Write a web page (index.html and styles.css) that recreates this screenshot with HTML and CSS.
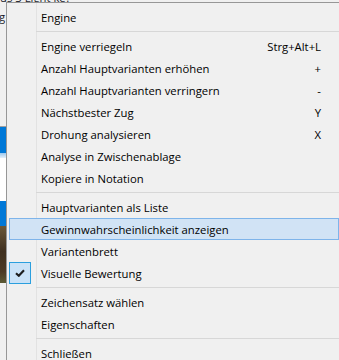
FILE: index.html
```html
<!DOCTYPE html>
<html lang="de">

<head>
    <meta charset="UTF-8">
    <meta name="viewport" content="width=device-width, initial-scale=1.0">
    <title>Engine Kontextmenü</title>
    <link rel="stylesheet" href="styles.css">
</head>

<body>
    <!-- window behind the popup, only its left edge shows -->
    <div class="backdrop">
        <div class="panel">
            <div class="caption">us 3 Lignt ke?</div>
            <div class="cut">g</div>
        </div>
        <div class="rule"></div>
        <div class="band blue"></div>
        <div class="band fade"></div>
        <div class="band white"></div>
        <div class="band blue-low"></div>
        <div class="band photo"></div>
        <div class="band grass"></div>
    </div>

    <ul class="menu">
        <li class="item"><span class="icon"></span><span class="label">Engine</span></li>
        <li class="sep"></li>
        <li class="item"><span class="icon"></span><span class="label">Engine verriegeln</span><span class="key">Strg+Alt+L</span></li>
        <li class="item"><span class="icon"></span><span class="label">Anzahl Hauptvarianten erhöhen</span><span class="key">+</span></li>
        <li class="item"><span class="icon"></span><span class="label">Anzahl Hauptvarianten verringern</span><span class="key">-</span></li>
        <li class="item"><span class="icon"></span><span class="label">Nächstbester Zug</span><span class="key">Y</span></li>
        <li class="item"><span class="icon"></span><span class="label">Drohung analysieren</span><span class="key">X</span></li>
        <li class="item"><span class="icon"></span><span class="label">Analyse in Zwischenablage</span></li>
        <li class="item"><span class="icon"></span><span class="label">Kopiere in Notation</span></li>
        <li class="sep"></li>
        <li class="item"><span class="icon"></span><span class="label">Hauptvarianten als Liste</span></li>
        <li class="item hot"><span class="icon"></span><span class="label">Gewinnwahrscheinlichkeit anzeigen</span></li>
        <li class="item"><span class="icon"></span><span class="label">Variantenbrett</span></li>
        <li class="item checked">
            <span class="icon">
                <svg width="10" height="8" viewBox="0 0 10 8">
                    <path d="M1 4.2 L3.8 6.8 L9 1.2" fill="none" stroke="#1e1e1e" stroke-width="2.1" />
                </svg>
            </span>
            <span class="label">Visuelle Bewertung</span>
        </li>
        <li class="sep"></li>
        <li class="item"><span class="icon"></span><span class="label">Zeichensatz wählen</span></li>
        <li class="item"><span class="icon"></span><span class="label">Eigenschaften</span></li>
        <li class="sep"></li>
        <li class="item"><span class="icon"></span><span class="label">Schließen</span></li>
    </ul>
</body>

</html>
```

FILE: styles.css
```css
/* win10 style popup menu over an app window */

body {
    margin: 0;
    height: 360px;
    overflow: hidden;
    position: relative;
    font-family: "Open Sans", "Noto Sans", sans-serif;
    font-size: 11.3px;
    color: #000;
    background: #f0f0f0;
}

/* background window */

.backdrop {
    display: flex;
    flex-direction: column;
}

.panel {
    height: 126px;
    background: #f0f0f0;
    color: #1b1d2c;
    overflow: hidden;
}

.caption {
    margin-top: -8px;
    line-height: 12px;
    white-space: nowrap;
}

.cut {
    margin-top: 7px;
    margin-left: -1px;
    line-height: 12px;
}

.rule {
    height: 1px;
    background: #a0a0a0;
}

.band.blue {
    height: 26px;
    background: #0078d7;
}

.band.fade {
    height: 5px;
    background: linear-gradient(#9cc8ee, #e4f0fa);
}

.band.white {
    height: 43px;
    background: #fff;
}

.band.blue-low {
    height: 25px;
    background: #0078d7;
}

.band.photo {
    height: 57px;
    background: linear-gradient(#6a5738, #40301f 45%, #4b3a25 80%, #5b5a35);
}

.band.grass {
    flex: 1;
    height: 80px;
    background: linear-gradient(#5d7b36, #7f9a4c 50%, #a6ba77);
}

/* the menu */

.menu {
    position: absolute;
    top: 2px;
    left: 6px;
    width: 336px;
    box-sizing: border-box;
    margin: 0;
    padding: 3px 2px;
    list-style: none;
    border: 1px solid #979797;
    background: linear-gradient(90deg, transparent 29px, #e2e2e2 29px, #e2e2e2 30px, transparent 30px), #f0f0f0;
}

.item {
    display: flex;
    align-items: center;
    height: 22px;
    padding-right: 18px;
    white-space: nowrap;
}

.icon {
    flex: none;
    display: flex;
    align-items: center;
    justify-content: center;
    width: 22px;
    height: 22px;
    margin-right: 10px;
    box-sizing: border-box;
}

.label {
    flex: 1;
}

.key {
    text-align: right;
}

.item.hot {
    background: #d1e3f5;
    box-shadow: inset 0 0 0 1px #7eb4ea;
}

.item.checked .icon {
    background: #cae2f7;
    border: 1px solid #2b9fde;
}

.sep {
    height: 0;
    margin: 3px 0 3px 27px;
    border-top: 1px solid #d7d7d7;
}
```
